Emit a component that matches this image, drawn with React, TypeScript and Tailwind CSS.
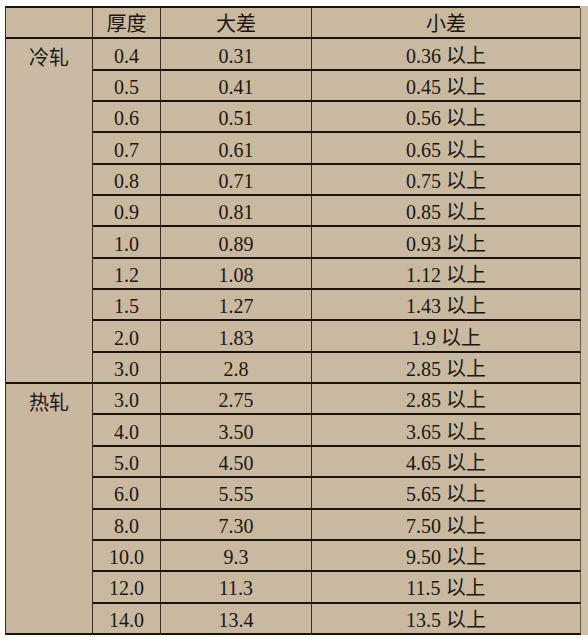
import React from "react";

const cold: [string, string, string][] = [
  ["0.4", "0.31", "0.36"],
  ["0.5", "0.41", "0.45"],
  ["0.6", "0.51", "0.56"],
  ["0.7", "0.61", "0.65"],
  ["0.8", "0.71", "0.75"],
  ["0.9", "0.81", "0.85"],
  ["1.0", "0.89", "0.93"],
  ["1.2", "1.08", "1.12"],
  ["1.5", "1.27", "1.43"],
  ["2.0", "1.83", "1.9"],
  ["3.0", "2.8", "2.85"],
];

const hot: [string, string, string][] = [
  ["3.0", "2.75", "2.85"],
  ["4.0", "3.50", "3.65"],
  ["5.0", "4.50", "4.65"],
  ["6.0", "5.55", "5.65"],
  ["8.0", "7.30", "7.50"],
  ["10.0", "9.3", "9.50"],
  ["12.0", "11.3", "11.5"],
  ["14.0", "13.4", "13.5"],
];

const cell =
  "flex items-center justify-center border-r border-r-[#3b2c20] border-b-2 border-b-[#1c120b] pt-[3px]";

function Rows({ rows }: { rows: [string, string, string][] }) {
  return (
    <>
      {rows.map(([a, b, c], i) => (
        <React.Fragment key={i}>
          <div className={cell}>{a}</div>
          <div className={cell}>{b}</div>
          <div className={cell + " border-r-[#6b5c4e]"}>
            {c} 以上
          </div>
        </React.Fragment>
      ))}
    </>
  );
}

export default function App() {
  return (
    <div
      className="w-[588px] h-[640px] bg-white pt-[6px] pl-[5px] overflow-hidden"
      style={{ fontFamily: '"Liberation Serif", "Noto Sans CJK SC", serif' }}
    >
      <div className="relative w-[583px] h-[629px] bg-[#cdbfa8]">
        <div className="grid grid-cols-[87px_68px_151px_269px] grid-rows-[repeat(20,31.35px)] w-[575px] border-t-2 border-t-[#1c120b] border-l-[1.5px] border-l-[#3b2c20] bg-[#c9b9a1] text-[20px] text-[#20160f] leading-none">
          <div className="border-r border-r-[#3b2c20] border-b-2 border-b-[#1c120b]" />
          <div className={cell}>厚度</div>
          <div className={cell}>大差</div>
          <div className={cell + " border-r-[#6b5c4e]"}>小差</div>

          <div className="row-span-11 flex justify-center pt-[9px] border-r border-r-[#3b2c20] border-b-2 border-b-[#1c120b] bg-[#cbbaa3]">
            冷轧
          </div>
          <Rows rows={cold} />
          <div className="row-span-8 flex justify-center pt-[9px] border-r border-r-[#3b2c20] border-b-2 border-b-[#1c120b] bg-[#cab7a0]">
            热轧
          </div>
          <Rows rows={hot} />
        </div>
      </div>
    </div>
  );
}
